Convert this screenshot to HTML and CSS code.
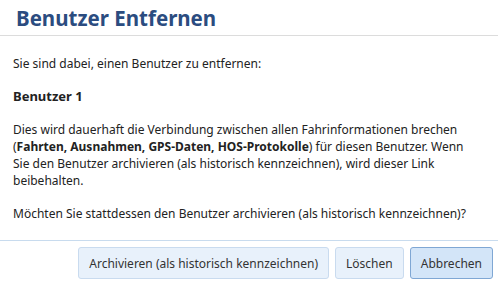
FILE: index.html
```html
<!DOCTYPE html>
<html lang="de">
<head>
  <meta charset="UTF-8">
  <meta name="viewport" content="width=device-width, initial-scale=1.0">
  <title>Benutzer Entfernen</title>
  <link rel="stylesheet" href="styles.css">
</head>
<body>
  <div class="dialog">
    <header class="dialog-header">
      <h1>Benutzer Entfernen</h1>
    </header>

    <div class="dialog-body">
      <p>Sie sind dabei, einen Benutzer zu entfernen:</p>
      <p class="user-name">Benutzer 1</p>
      <p>Dies wird dauerhaft die Verbindung zwischen allen Fahrinformationen brechen
        (<b>Fahrten, Ausnahmen, GPS-Daten, HOS-Protokolle</b>) für diesen Benutzer. Wenn
        Sie den Benutzer archivieren (als historisch kennzeichnen), wird dieser Link
        beibehalten.</p>
      <p>Möchten Sie stattdessen den Benutzer archivieren (als historisch kennzeichnen)?</p>
    </div>

    <footer class="dialog-footer">
      <button class="btn">Archivieren (als historisch kennzeichnen)</button>
      <button class="btn">Löschen</button>
      <button class="btn btn-primary">Abbrechen</button>
    </footer>
  </div>
</body>
</html>
```

FILE: styles.css
```css
body {
  margin: 0;
  background: #fff;
  font-family: "Noto Sans", "Open Sans", sans-serif;
  color: #222;
}
.dialog {
  width: 498px;
  height: 283px;
  background: #fff;
  display: flex;
  flex-direction: column;
}
.dialog-header {
  height: 35px;
  border-bottom: 1px solid #dcdcdc;
  padding: 0 16px;
  display: flex;
  align-items: center;
}
.dialog-header h1 {
  margin: 0;
  font-size: 20.5px;
  font-weight: bold;
  color: #2b4c80;
}
.dialog-body {
  flex: 1;
  padding: 19px 22px 0 13px;
  font-size: 12px;
  line-height: 17px;
}
.dialog-body p {
  margin: 0 0 16px;
}
.user-name {
  font-weight: bold;
  font-size: 13px;
}
.dialog-footer {
  border-top: 1px solid #c8dbee;
  padding: 6px 5px 4px;
  display: flex;
  justify-content: flex-end;
  gap: 6px;
}
.btn {
  font-family: inherit;
  font-size: 12px;
  color: #333;
  background: #e8f1fb;
  border: 1px solid #c9dbef;
  border-radius: 3px;
  height: 32px;
  padding: 0 10px;
  cursor: pointer;
}
.btn-primary {
  background: #d3e5f8;
  border-color: #7fa7d4;
}
```
